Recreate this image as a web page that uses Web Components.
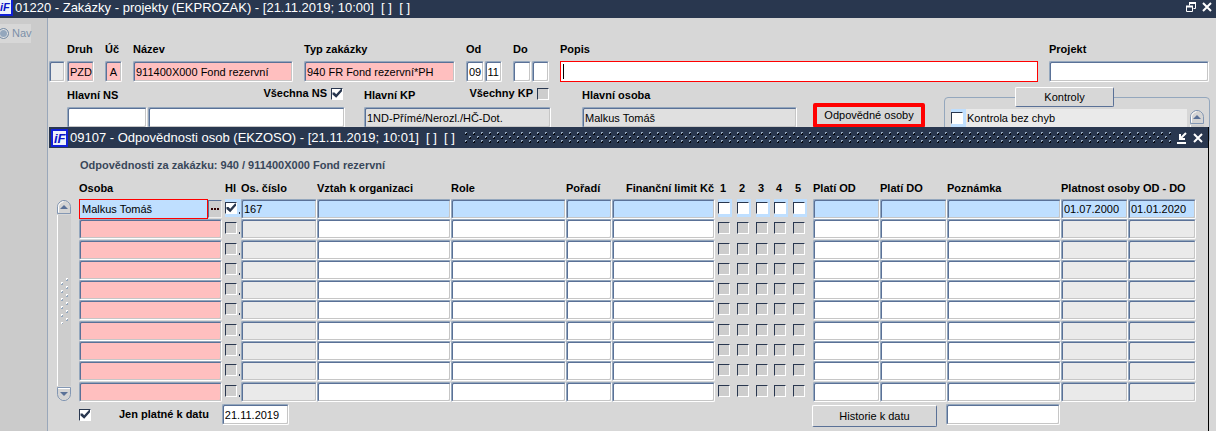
<!DOCTYPE html>
<html lang="cs">
<head>
<meta charset="utf-8">
<title>Zakázky - projekty</title>
<style>
    :root {
        --navy: #29374f;
        --face: #d7d7d7;
        --side: #cbcbcb;
        --light: #94a7bd;
        --steel: #5a7197;
        --grey: #c6c6c6;
        --pink: #ffbfbf;
        --blue: #bfdfff;
        --muted: #eaeaea;
    }

    body {
        margin: 0;
        font: 11px/13px "Liberation Sans", Arial, sans-serif;
        color: #000;
        background: var(--face);
    }
</style>
</head>
<body>
<project-app></project-app>

<script>
class TitleBar extends HTMLElement {
    constructor() {
        super();
        this.attachShadow({mode: 'open'});
    }

    connectedCallback() {
        // the main bar shows only the right part of the logo tile
        const logo = this.hasAttribute('main')
            ? `<svg class="logo" width="13" height="16">
    <path d="M0 0h12v15h-12z" fill="#eef2fb"/>
    <path d="M12 0v15h-12" fill="none" stroke="#1020d8" stroke-width="2"/>
    <text x="0" y="11" font-size="11" font-weight="bold" font-style="italic" fill="#0a14c8">iF</text>
      </svg>`
            : `<svg class="logo" width="17" height="18" viewBox="0 0 17 18">
    <rect x="1" y="1" width="15" height="16" fill="#eef2fb" stroke="#1020d8" stroke-width="2"/>
    <text x="3" y="14" font-size="13" font-weight="bold" font-style="italic" fill="#0a14c8">iF</text>
      </svg>`;

        this.shadowRoot.innerHTML = `
      <style>
    :host {
        display: flex;
        align-items: center;
        height: 21px;
        gap: 2px;
        padding: 0 3px 0 2px;
        overflow: hidden;
        background: var(--navy);
        color: #fff;
        font-size: 13px;
        line-height: 16px;
    }

    :host([main]) {
        height: 18px;
        padding: 0 2px 0 0;
        align-items: flex-start;
    }

    .logo { flex: none; }

    h1 {
        margin: 0;
        font: inherit;
        white-space: pre;
    }

    .grip { flex: 1; height: 12px; margin: 0 2px 0 7px; }
    :host([main]) .grip rect { visibility: hidden; }

    slot { display: flex; gap: 2px; }
      </style>

      ${logo}
      <h1>${this.getAttribute('heading')}</h1>
      <svg class="grip">
    <defs>
      <pattern id="dots" width="8" height="8" patternUnits="userSpaceOnUse">
        <path d="M1 0h2v1h-1v1h-1zM5 4h2v1h-1v1h-1z" fill="#94a7bd"/>
        <path d="M3 1v2h-2v-1h1v-1zM7 5v2h-2v-1h1v-1z" fill="#05080f"/>
      </pattern>
    </defs>
    <rect width="100%" height="100%" fill="url(#dots)"/>
      </svg>
      <slot></slot>
  `;
    }
}

class TitleButton extends HTMLElement {
    constructor() {
        super();
        this.attachShadow({mode: 'open'});
    }

    connectedCallback() {
        const icons = {
            close: '<path d="M2 2l8 8M10 2l-8 8" stroke-width="2"/>',
            restore: '<path d="M4.500 4.500v-2h6v5h-2M1.500 5.500h6v5h-6z"/><path d="M4 2h7M1 5.500h7" stroke-width="2"/>',
            minimize: '<path d="M10 1l-5 5M4 2v5h5" stroke-width="2"/><path d="M1 11h9" stroke-width="2"/>'
        };
        this.shadowRoot.innerHTML = `
      <style>
    :host { display: block; }

    button {
        display: block;
        width: 14px;
        height: 14px;
        padding: 1px;
        border: 0;
        background: none;
        color: #fff;
    }

    svg { display: block; fill: none; stroke: currentColor; }
      </style>

      <button aria-label="${this.getAttribute('name')}"><svg width="12" height="12">${icons[this.getAttribute('icon')]}</svg></button>
  `;
    }
}

class FormField extends HTMLElement {
    constructor() {
        super();
        this.attachShadow({mode: 'open'});
    }

    connectedCallback() {
        const label = this.getAttribute('label');
        const values = (this.getAttribute('value') || '').split('|');
        const inputs = values.map((value, i) => `<input id="f${i}" aria-label="${label || this.getAttribute('name') || 'Pole'}" value="${value}">`);
        const head = label ? `<div class="head"><label for="f0">${label}</label><slot></slot></div>` : '';

        this.shadowRoot.innerHTML = `
      <style>
    :host { display: block; min-width: 0; }

    .head {
        display: flex;
        justify-content: space-between;
        align-items: center;
        height: 13px;
        margin-bottom: 5px;
        font-weight: bold;
        white-space: nowrap;
    }

    ::slotted(check-box) { margin: -4px 2px 0 0; }

    .inputs { display: flex; gap: 1px; }

    input {
        flex: 1;
        min-width: 0;
        width: 100%;
        height: 21px;
        box-sizing: border-box;
        padding: 0 0 0 2px;
        border: 1px solid;
        border-color: var(--light) #fff #fff var(--light);
        border-radius: 2px;
        box-shadow: inset 1px 1px var(--steel), inset -1px -1px var(--grey);
        background: #fff;
        color: inherit;
        font: inherit;
        outline: none;
    }

    :host([tone=pink]) input { background: var(--pink); }
    :host([tone=muted]) input { background: #e0e0e0; }
    :host([tone=faint]) input { background: var(--muted); }
    :host([center]) input { padding: 0; text-align: center; }
    :host([split]) input:first-child { flex: 0 0 80px; }

    :host([cell]) input { display: block; height: 20px; }
    :host([tone=blue]) input { background: var(--blue); }

    :host([active]) input {
        border: 1px solid #f00;
        border-radius: 0;
        box-shadow: none;
    }

    /* text cursor of the focused field */
    :host([caret]) .inputs { position: relative; }
    :host([caret]) .inputs::after {
        content: "";
        position: absolute;
        left: 3px;
        top: 3px;
        width: 1px;
        height: 15px;
        background: #000;
    }
      </style>

      ${head}
      <div class="inputs">${inputs.join('')}</div>
  `;
    }
}

class CheckBox extends HTMLElement {
    constructor() {
        super();
        this.attachShadow({mode: 'open'});
    }

    connectedCallback() {
        const checked = this.hasAttribute('checked') ? 'checked' : '';
        const name = this.getAttribute('name');
        this.shadowRoot.innerHTML = `
      <style>
    :host { display: flex; align-items: center; gap: 4px; }
    :host([after]) { flex-direction: row-reverse; }

    input {
        appearance: none;
        flex: none;
        display: block;
        box-sizing: border-box;
        width: 12px;
        height: 12px;
        margin: 0;
        border: 1px solid;
        border-color: var(--navy) #fff #fff var(--navy);
        background: #fff;
    }

    :host([off]) input { background: #cdcdcd; }

    input:checked::before {
        content: "";
        display: block;
        width: 10px;
        height: 10px;
        background: var(--navy);
        clip-path: polygon(5% 40%, 25% 40%, 42% 58%, 90% 5%, 100% 5%, 100% 28%, 42% 92%, 5% 60%);
    }
      </style>

      <input type="checkbox" id="c" ${checked} ${name ? `aria-label="${name}"` : ''}>
      ${name ? '' : '<label for="c"><slot></slot></label>'}
  `;
    }
}

class PushButton extends HTMLElement {
    constructor() {
        super();
        this.attachShadow({mode: 'open'});
        this.shadowRoot.innerHTML = `
      <style>
    :host { display: block; }

    button {
        display: block;
        width: 100%;
        height: 22px;
        padding: 0;
        border: 1px solid;
        border-color: #fff var(--steel) var(--steel) #fff;
        border-radius: 2px;
        background: var(--face);
        color: inherit;
        font: inherit;
        white-space: nowrap;
    }

    :host([low]) button { height: 20px; }

    :host([marked]) button {
        height: 25px;
        border: 4px solid #f00;
    }
      </style>

      <button><slot></slot></button>
  `;
    }
}

class ScrollTrack extends HTMLElement {
    constructor() {
        super();
        this.attachShadow({mode: 'open'});
        this.shadowRoot.innerHTML = `
      <style>
    :host { display: flex; flex-direction: column; align-items: center; }

    button {
        display: block;
        flex: none;
        width: 16px;
        height: 16px;
        padding: 0;
        border: 0;
        background: none;
    }

    button svg { display: block; }

    .track {
        flex: 1;
        display: flex;
        align-items: center;
        justify-content: center;
        box-sizing: border-box;
        width: 14px;
        border-left: 1px solid #fff;
        background: #cdcdcd;
    }

    :host([short]) .track svg, :host([short]) .down { display: none; }
      </style>

      <button aria-label="Nahoru"><svg width="16" height="16">
    <path d="M1.500 14.500v-7q0-3 3-5l2-1h3l2 1q3 2 3 5v7z" fill="#d4d4d4" stroke="#8397b3"/>
    <path d="M2.500 13.500v-6q0-3 3-4l2-1" fill="none" stroke="#fff"/>
    <path d="M4 10l4-4 4 4z" fill="#5a7197"/>
      </svg></button>
      <div class="track"><svg width="10" height="46">
    <defs>
      <pattern id="sash" width="10" height="8" patternUnits="userSpaceOnUse">
        <path d="M6 0h2v1h-1v1h-1zM1 4h2v1h-1v1h-1z" fill="#fff"/>
        <path d="M8 1v2h-2v-1h1v-1zM3 5v2h-2v-1h1v-1z" fill="#94a7bd"/>
      </pattern>
    </defs>
    <rect width="10" height="46" fill="url(#sash)"/>
      </svg></div>
      <button class="down" aria-label="Dolů"><svg width="16" height="16">
    <path d="M1.500 1.500v7q0 3 3 5l2 1h3l2-1q3-2 3-5v-7z" fill="#d4d4d4" stroke="#8397b3"/>
    <path d="M2 2.500h12" stroke="#fff"/>
    <path d="M4 6l4 4 4-4z" fill="#5a7197"/>
      </svg></button>
  `;
    }
}

class PeopleTable extends HTMLElement {
    constructor() {
        super();
        this.attachShadow({mode: 'open'});
        this.render();
    }

    // [heading, width, kind of cell, value in the first row]
    get columns() {
        return [
            ['Osoba', 143, 'pink', 'Malkus Tomáš'],
            ['Hl', 19, 'main'],
            ['Os. číslo', 76, 'faint', '167'],
            ['Vztah k organizaci', 134, 'white'],
            ['Role', 115, 'white'],
            ['Pořadí', 46, 'white'],
            ['Finanční limit Kč', 103, 'white'],
            ['1', 19, 'check'],
            ['2', 19, 'check'],
            ['3', 18, 'check'],
            ['4', 19, 'check'],
            ['5', 23, 'check'],
            ['Platí OD', 67, 'white'],
            ['Platí DO', 67, 'white'],
            ['Poznámka', 0, 'white'],
            ['Platnost osoby OD - DO', 67, 'faint', '01.07.2000'],
            ['', 68, 'faint', '01.01.2020']
        ];
    }

    cell([name, , kind, value], first) {
        if (kind === 'check' || kind === 'main') {
            const state = first ? (kind === 'main' ? 'checked' : '') : 'off';
            return `<td><div class="tick ${kind}"><check-box name="${name}" ${state}></check-box></div></td>`;
        }
        const title = name || 'Platnost osoby DO';
        if (first && name === 'Osoba') {
            return `<td><div class="person"><form-field cell active tone="blue" name="${title}" value="${value}"></form-field><button aria-label="Výběr osoby"><i></i><i></i><i></i></button></div></td>`;
        }
        return `<td><form-field cell name="${title}" tone="${first ? 'blue' : kind}" value="${first && value || ''}"></form-field></td>`;
    }

    render() {
        const cols = this.columns;
        const rows = Array.from({length: 10}, (_, i) =>
            `<tr class="${i ? '' : 'current'}">${cols.map(c => this.cell(c, i === 0)).join('')}</tr>`);

        this.shadowRoot.innerHTML = `
      <style>
    :host { display: block; }

    table {
        width: 100%;
        height: 220px;
        table-layout: fixed;
        border-collapse: collapse;
    }

    th {
        height: 17px;
        padding: 0;
        text-align: left;
        vertical-align: top;
        white-space: nowrap;
    }

    th.main { padding-left: 3px; }
    th.check { padding-left: 5px; }
    th.right { text-align: right; padding-right: 1px; }

    td { padding: 0; vertical-align: top; }

    .tick {
        display: flex;
        align-items: flex-start;
        box-sizing: border-box;
        width: 14px;
        height: 18px;
        margin-left: 3px;
        padding-top: 3px;
    }

    .current .tick { background: var(--blue); }

    /* small mark after the main-person tick */
    .main.tick { width: 16px; }
    .main.tick::after {
        content: "";
        width: 1px;
        height: 2px;
        margin: 10px 0 0 2px;
        background: var(--navy);
    }

    .person { display: flex; }
    .person form-field { flex: 1; }

    .person button {
        display: flex;
        align-items: center;
        justify-content: center;
        gap: 1px;
        width: 14px;
        height: 18px;
        margin-top: 1px;
        padding: 0;
        border: 1px solid;
        border-color: var(--steel) #eee #eee var(--steel);
        background: #cdcdcd;
    }

    i { width: 2px; height: 2px; background: #300; }
      </style>

      <table>
    <colgroup>${cols.map(c => c[1] ? `<col style="width:${c[1]}px">` : '<col>').join('')}</colgroup>
    <thead><tr>${cols.filter(c => c[0]).map(c =>
        `<th scope="col" class="${c[2]}${c[0].startsWith('Fin') ? ' right' : ''}"${c[0].startsWith('Platnost') ? ' colspan="2"' : ''}>${c[0]}</th>`).join('')}</tr></thead>
    <tbody>${rows.join('')}</tbody>
      </table>
  `;
    }
}

class PeopleDialog extends HTMLElement {
    constructor() {
        super();
        this.attachShadow({mode: 'open'});
        this.shadowRoot.innerHTML = `
      <style>
    :host {
        display: block;
        background: var(--face);
        border-right: 1px solid #000;
    }

    .body { padding: 11px 12px 0 7px; }

    h2 {
        margin: 0 0 10px 24px;
        color: #39475a;
        font: bold 11px/13px "Liberation Sans", Arial, sans-serif;
    }

    .grid { display: flex; gap: 7px; }
    scroll-track { flex: none; margin-top: 17px; }
    people-table { flex: 1; min-width: 0; }

    .foot {
        display: flex;
        align-items: flex-start;
        gap: 9px;
        margin: 2px 136px 0 23px;
    }

    .left { flex: 1; display: flex; gap: 13px; }
    .left check-box { gap: 28px; font-weight: bold; }
    .date { width: 67px; }
    .foot push-button { width: 125px; margin-top: 1px; }
    .history { width: 114px; }
      </style>

      <title-bar heading="09107 - Odpovědnosti osob (EKZOSO) - [21.11.2019; 10:01]  [ ]  [ ]">
    <title-button icon="minimize" name="Minimalizovat"></title-button>
    <title-button icon="close" name="Zavřít"></title-button>
      </title-bar>
      <div class="body">
    <h2>Odpovědnosti za zakázku: 940 / 911400X000 Fond rezervní</h2>
    <div class="grid">
      <scroll-track></scroll-track>
      <people-table></people-table>
    </div>
    <div class="foot">
      <div class="left">
        <check-box checked>Jen platné k datu</check-box>
        <form-field class="date" name="Datum" value="21.11.2019"></form-field>
      </div>
      <push-button>Historie k datu</push-button>
      <form-field class="history" name="Historie k datu"></form-field>
    </div>
      </div>
  `;
    }
}

class ProjectApp extends HTMLElement {
    constructor() {
        super();
        this.attachShadow({mode: 'open'});
        this.shadowRoot.innerHTML = `
      <style>
    :host { display: flex; flex-direction: column; min-height: 100vh; }

    .work { flex: 1; display: flex; }

    nav {
        flex: none;
        box-sizing: border-box;
        width: 48px;
        padding-top: 6px;
        border-right: 1px solid #99a7ba;
        background: var(--side);
        color: #7c90a8;
    }

    nav label {
        display: flex;
        align-items: center;
        gap: 3px;
        width: 31px;
        height: 19px;
        background: var(--face);
    }

    nav input {
        appearance: none;
        flex: none;
        box-sizing: border-box;
        width: 11px;
        height: 11px;
        margin: 0 0 0 -2px;
        border: 1px solid #7c90a8;
        border-radius: 50%;
        box-shadow: inset 0 0 0 1px #e6e6e6;
        background: #94a7bd;
    }

    main { flex: 1; min-width: 0; position: relative; padding: 25px 7px 0 1px; }

    .row { display: flex; align-items: flex-end; gap: 11px; }
    .type { display: flex; align-items: flex-end; gap: 2px; }
    .w16 { width: 16px; }
    .w17 { width: 17px; }
    .w27 { width: 27px; }
    .w36 { width: 36px; }
    .w151 { width: 151px; }
    .w160 { width: 160px; }
    .grow { flex: 1; }

    .second {
        display: grid;
        grid-template-columns: 278px 187px 215px 112px 1fr;
        align-items: start;
        column-gap: 19px;
        margin: 7px 0 0 18px;
    }

    .person { padding-left: 12px; margin-right: -12px; }
    .marked { margin: 14px -9px 0 9px; }

    fieldset {
        min-width: 0;
        height: 56px;
        box-sizing: border-box;
        margin: -2px -1px 0 9px;
        padding: 2px 4px 0 6px;
        border: 1px solid var(--light);
        border-radius: 4px;
    }

    legend { width: 99px; margin-left: 64px; padding: 0; }

    .list { display: flex; gap: 2px; height: 40px; }
    .list check-box {
        flex: 1;
        height: 18px;
        background: linear-gradient(90deg, var(--blue) 15px, var(--muted) 15px);
    }

    people-dialog {
        position: absolute;
        left: 1px;
        right: 7px;
        top: 109px;
        bottom: 0;
    }
      </style>

      <title-bar main heading="01220 - Zakázky - projekty (EKPROZAK) - [21.11.2019; 10:00]  [ ]  [ ]">
    <title-button icon="restore" name="Obnovit"></title-button>
    <title-button icon="close" name="Zavřít"></title-button>
      </title-bar>
      <div class="work">
    <nav><label><input type="radio" name="nav">Nav</label></nav>
    <main>
      <div class="row">
        <div class="type">
          <form-field class="w16" tone="faint" name="Stav"></form-field>
          <form-field class="w27" tone="pink" label="Druh" value="PZD"></form-field>
        </div>
        <form-field class="w17" tone="pink" center label="Úč" value="A"></form-field>
        <form-field class="w160" tone="pink" label="Název" value="911400X000 Fond rezervní"></form-field>
        <form-field class="w151" tone="pink" label="Typ zakázky" value="940 FR Fond rezervní*PH"></form-field>
        <form-field class="w36" label="Od" value="09|11"></form-field>
        <form-field class="w36" label="Do" value="|"></form-field>
        <form-field class="grow" active caret label="Popis"></form-field>
        <form-field class="w160" label="Projekt"></form-field>
      </div>
      <div class="second">
        <form-field split label="Hlavní NS" value="|"><check-box after checked>Všechna NS</check-box></form-field>
        <form-field tone="muted" label="Hlavní KP" value="1ND-Přímé/Nerozl./HČ-Dot."><check-box after off>Všechny KP</check-box></form-field>
        <form-field class="person" tone="muted" label="Hlavní osoba" value="Malkus Tomáš"></form-field>
        <push-button class="marked" marked>Odpovědné osoby</push-button>
        <fieldset>
          <legend><push-button low>Kontroly</push-button></legend>
          <div class="list">
            <check-box>Kontrola bez chyb</check-box>
            <scroll-track short></scroll-track>
          </div>
        </fieldset>
      </div>
      <people-dialog></people-dialog>
    </main>
      </div>
  `;
    }
}

customElements.define('title-button', TitleButton);
customElements.define('title-bar', TitleBar);
customElements.define('form-field', FormField);
customElements.define('check-box', CheckBox);
customElements.define('push-button', PushButton);
customElements.define('scroll-track', ScrollTrack);
customElements.define('people-table', PeopleTable);
customElements.define('people-dialog', PeopleDialog);
customElements.define('project-app', ProjectApp);
</script>
</body>
</html>
